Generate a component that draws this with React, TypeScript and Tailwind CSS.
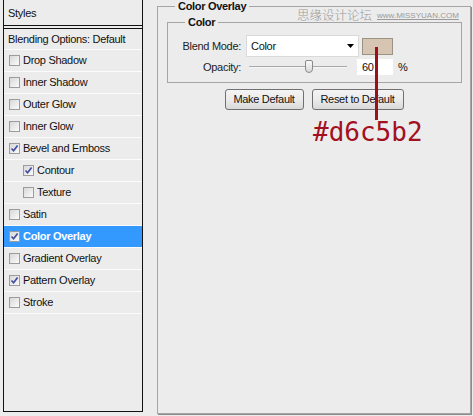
import React from "react";

type Item = { label: string; checked: boolean; indent?: boolean; active?: boolean };

const items: Item[] = [
  { label: "Drop Shadow", checked: false },
  { label: "Inner Shadow", checked: false },
  { label: "Outer Glow", checked: false },
  { label: "Inner Glow", checked: false },
  { label: "Bevel and Emboss", checked: true },
  { label: "Contour", checked: true, indent: true },
  { label: "Texture", checked: false, indent: true },
  { label: "Satin", checked: false },
  { label: "Color Overlay", checked: true, active: true },
  { label: "Gradient Overlay", checked: false },
  { label: "Pattern Overlay", checked: true },
  { label: "Stroke", checked: false },
];

function Check({ on }: { on: boolean }) {
  return (
    <span className="flex h-[11px] w-[11px] shrink-0 items-center justify-center border border-[#9c9c9c] bg-gradient-to-br from-[#d8d8d8] to-[#fbfbfb]">
      {on && (
        <svg width="9" height="9" viewBox="0 0 9 9">
          <path d="M1.5 4.5 L3.6 6.8 L7.6 1.6" fill="none" stroke="#3f4c9e" strokeWidth="1.7" />
        </svg>
      )}
    </span>
  );
}

function StyleRow({ item }: { item: Item }) {
  return (
    <div
      className={
        "flex h-[22px] items-center gap-[3px] border-b border-[#fbfbfb] " +
        (item.indent ? "pl-[19px] " : "pl-[5px] ") +
        (item.active ? "bg-[#3399ff] font-bold text-white" : "text-[#111]")
      }
    >
      <Check on={item.checked} />
      <span>{item.label}</span>
    </div>
  );
}

function Button({ children, w }: { children: React.ReactNode; w: string }) {
  return (
    <div
      className={
        w +
        " flex h-[21px] items-center justify-center rounded-[3px] border border-[#707070] bg-gradient-to-b from-[#f4f4f4] via-[#ebebeb] to-[#d9d9d9] text-[#111]"
      }
    >
      {children}
    </div>
  );
}

export default function App() {
  return (
    <div className="relative flex h-[416px] w-[473px] items-start overflow-hidden bg-[#ececec] text-[11px] tracking-[-0.3px] [font-family:'Liberation_Sans',sans-serif]">
      {/* styles list */}
      <div className="ml-[3px] h-[412px] w-[140px] border border-t-0 border-[#111] bg-[#ececec]">
        <div className="flex h-[26px] items-center border-b border-[#111] pl-[4px] pt-[2px] text-[#111]">Styles</div>
        <div className="mt-[2px] flex h-[22px] items-center border-y border-t-[#111] border-b-[#fbfbfb] pl-[4px] text-[#111]">
          Blending Options: Default
        </div>
        {items.map((item) => (
          <StyleRow key={item.label} item={item} />
        ))}
      </div>

      {/* settings */}
      <fieldset className="ml-[14px] h-[414px] w-[314px] border border-[#a5a5a5] shadow-[1px_1px_0_#8c8c8c]">
        <legend className="ml-[17px] px-[3px] font-bold leading-[13px] text-[#111]">Color Overlay</legend>
        <fieldset className="ml-[9px] mt-[3px] w-[295px] border border-[#a5a5a5] pb-[7px]">
          <legend className="ml-[17px] px-[3px] font-bold leading-[13px] text-[#111]">Color</legend>
          <div className="mt-[6px] flex h-[22px] items-center">
            <span className="w-[73px] text-right text-[#222]">Blend Mode:</span>
            <div className="ml-[5px] flex h-[22px] w-[113px] items-center justify-between border border-[#dadada] bg-white pl-[4px] pr-[4px] text-[#111]">
              <span>Color</span>
              <svg width="7" height="4" viewBox="0 0 7 4">
                <path d="M0 0 H7 L3.5 4 Z" fill="#000" />
              </svg>
            </div>
            <div className="ml-[3px] h-[17px] w-[31px] border border-[#9d9385] bg-[#d6c5b2]" />
          </div>
          <div className="mt-[2px] flex h-[16px] items-center">
            <span className="w-[73px] text-right text-[#222]">Opacity:</span>
            <div className="relative ml-[8px] h-[16px] w-[98px]">
              <div className="absolute left-0 right-0 top-[7px] h-[2px] border-t border-[#a8a8a8] bg-[#f6f6f6]" />
              <div className="absolute left-[56px] top-[1px] h-[13px] w-[8px] rounded-b-[4px] rounded-t-[2px] border border-[#8a8a8a] bg-gradient-to-b from-[#fafafa] to-[#d8d8d8]" />
            </div>
            <div className="ml-[10px] flex h-[16px] w-[36px] items-center bg-white pl-[5px] text-[#111]">60</div>
            <span className="ml-[5px] text-[#111]">%</span>
          </div>
        </fieldset>
        <div className="mt-[6px] flex justify-center gap-[8px]">
          <Button w="w-[79px]">Make Default</Button>
          <Button w="w-[92px]">Reset to Default</Button>
        </div>
      </fieldset>

      {/* watermark */}
      <div className="absolute left-[297px] top-[7px] flex items-end gap-[5px] tracking-normal text-[#9a9a9a]">
        <span className="text-[12.5px] font-light leading-[15px] [font-family:'Noto_Sans_CJK_SC',sans-serif]">思缘设计论坛</span>
        <span className="pb-[2px] text-[8px] leading-[9px] underline">www.MISSYUAN.COM</span>
      </div>

      {/* colour annotation */}
      <div className="absolute left-[375px] top-[47px] h-[73px] w-[3px] bg-[#9e0f1c]" />
      <div className="absolute left-[313px] top-[119px] text-[26px] leading-none tracking-normal text-[#a3101e] [font-family:'DejaVu_Sans_Mono',monospace]">
        #d6c5b2
      </div>
    </div>
  );
}
